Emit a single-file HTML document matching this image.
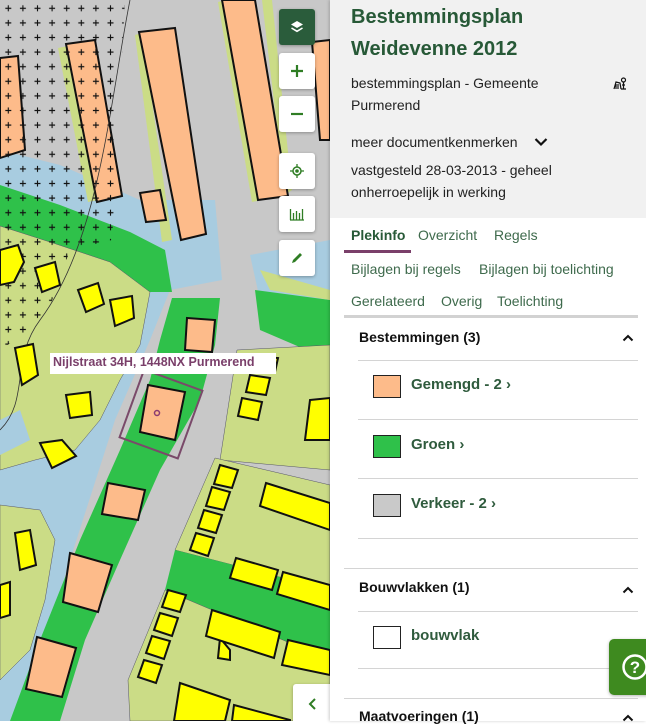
<!DOCTYPE html>
<html><head><meta charset="utf-8">
<style>
*{margin:0;padding:0;box-sizing:border-box}
body{width:646px;height:721px;overflow:hidden;position:relative;font-family:"Liberation Sans",sans-serif;background:#fff}
#map{position:absolute;left:0;top:0;width:330px;height:721px;overflow:hidden}
.btn{position:absolute;left:279px;width:36px;height:36px;background:#fff;border-radius:3px;box-shadow:0 1px 3px rgba(0,0,0,.3);display:flex;align-items:center;justify-content:center}
#panel{position:absolute;left:330px;top:0;width:316px;height:721px;background:#fff;box-shadow:-1px 0 3px rgba(0,0,0,.2)}
.hdr{position:absolute;left:0;top:0;width:316px;height:218px;background:#f1f1f1}
.t{position:absolute;white-space:nowrap}
.title{left:21px;font-size:20px;font-weight:bold;color:#275937}
.sm{left:21px;font-size:14px;color:#222}
.tab{font-size:14px;color:#3e6a4c}
.line{position:absolute;height:1px;background:#d4d4d4}
.sec{left:29px;font-size:14px;font-weight:bold;color:#111}
.sw{position:absolute;left:43px;width:28px;height:23px;border:1px solid #222}
.it{left:81px;font-size:15px;font-weight:bold;color:#2f5b3d}
.car{position:absolute;left:292px;font-size:13px;color:#111}
</style></head><body>
<div id="map">
<svg width="330" height="721" viewBox="0 0 330 721">
<defs>
<pattern id="pl" width="14.6" height="14.6" patternUnits="userSpaceOnUse" x="1" y="1">
<path d="M7.3 4.3v6M4.3 7.3h6" stroke="#111" stroke-width="1.1"/>
</pattern>
</defs>
<rect width="330" height="721" fill="#c8c8c8"/>
<!-- water -->
<polygon points="0,150 60,165 140,200 215,200 222,280 170,290 150,340 115,420 70,560 20,721 0,721" fill="#a8cce0"/>
<polygon points="250,255 330,240 330,330 260,300" fill="#a8cce0"/>
<!-- green band -->
<polygon points="0,185 60,205 130,232 165,250 172,292 150,292 110,262 50,242 0,226" fill="#2fc14a"/>
<polygon points="255,290 330,300 330,360 260,330" fill="#2fc14a"/>
<!-- left light green -->
<polygon points="0,226 50,242 110,262 150,292 140,345 120,380 100,420 75,450 35,460 0,470" fill="#cbdc86" stroke="#556" stroke-width=".5"/>
<polygon points="0,505 40,510 55,540 45,600 30,650 0,680" fill="#cbdc86" stroke="#556" stroke-width=".5"/>
<polygon points="0,420 20,410 30,440 0,455" fill="#a8cce0"/>
<!-- green strip along road -->
<polygon points="172,298 220,298 215,345 200,400 160,470 120,560 85,640 60,721 10,721 40,640 80,540 120,450 150,380 160,340" fill="#2fc14a"/>
<!-- right blocks -->
<polygon points="237,350 330,345 330,470 220,460" fill="#cbdc86" stroke="#556" stroke-width=".5"/>
<polygon points="215,458 330,485 330,590 175,550" fill="#cbdc86" stroke="#556" stroke-width=".5"/>
<polygon points="175,550 330,590 330,660 165,590" fill="#2fc14a"/>
<polygon points="165,590 330,660 330,721 130,721 128,680" fill="#cbdc86" stroke="#556" stroke-width=".5"/>
<polygon points="260,270 330,290 330,300 270,290" fill="#cbdc86"/>
<!-- light green strips near buildings -->
<polygon points="58,48 68,46 98,200 88,202" fill="#cbdc86"/>
<polygon points="135,35 142,33 172,240 162,242" fill="#cbdc86"/>
<polygon points="218,2 226,0 262,200 252,202" fill="#cbdc86"/>
<polygon points="262,0 272,0 292,190 285,195" fill="#cbdc86"/>
<!-- orange buildings -->
<g fill="#fdbb8a" stroke="#111" stroke-width="2">
<polygon points="0,58 18,56 25,150 0,158"/>
<polygon points="66,44 95,40 122,196 97,202"/>
<polygon points="139,32 175,28 206,234 181,240"/>
<polygon points="140,193 160,190 166,220 146,222"/>
<polygon points="222,0 255,0 288,196 258,200"/>
<polygon points="312,42 330,40 330,140 320,140"/>
<polygon points="187,318 215,320 212,352 185,350"/>
<polygon points="148,385 185,392 175,440 140,432"/>
<polygon points="108,483 145,490 138,520 102,514"/>
<polygon points="70,553 112,565 98,612 63,602"/>
<polygon points="37,637 76,648 62,697 26,689"/>
</g>
<!-- crosses area -->
<polygon points="0,0 125,0 112,240 70,250 45,320 0,350" fill="url(#pl)"/>
<path d="M130 0 C110 100 100 240 40 320 C10 360 30 400 0 430" stroke="#333" fill="none" stroke-width=".8"/>
<rect x="130" y="378" width="62" height="72" fill="none" stroke="#7a4a6a" stroke-width="2" transform="rotate(20 161 414)"/>
<circle cx="157" cy="413" r="2.5" fill="none" stroke="#8a3a70" stroke-width="1.5"/>
<!-- yellow houses -->
<g fill="#ffff00" stroke="#111" stroke-width="2">
<polygon points="0,250 18,245 24,262 14,282 0,285"/>
<polygon points="35,268 55,262 60,285 42,292"/>
<polygon points="78,290 98,283 104,304 86,312"/>
<polygon points="110,300 132,296 134,318 115,326"/>
<polygon points="15,348 33,344 38,375 22,385"/>
<polygon points="66,395 90,392 92,415 70,418"/>
<polygon points="40,443 62,440 76,456 52,468"/>
<polygon points="15,533 30,530 36,565 20,570"/>
<polygon points="0,585 10,582 10,615 0,618"/>
<polygon points="220,638 230,650 230,660 218,658"/>
<polygon points="260,357 278,358 275,372 258,370"/>
<polygon points="250,375 270,378 266,395 246,392"/>
<polygon points="242,398 262,402 258,420 238,416"/>
<polygon points="310,400 330,398 330,440 305,440"/>
<polygon points="220,465 238,470 232,488 214,484"/>
<polygon points="212,487 230,492 224,510 206,506"/>
<polygon points="204,510 222,515 216,533 198,528"/>
<polygon points="196,533 214,538 208,556 190,550"/>
<polygon points="266,483 330,503 330,530 260,506"/>
<polygon points="236,558 278,570 272,590 230,578"/>
<polygon points="283,572 330,585 330,610 277,594"/>
<polygon points="168,590 186,595 180,612 162,607"/>
<polygon points="160,613 178,618 172,636 154,630"/>
<polygon points="152,636 170,641 164,659 146,653"/>
<polygon points="144,660 162,665 156,683 138,677"/>
<polygon points="212,610 280,632 274,658 206,636"/>
<polygon points="288,640 330,650 330,675 282,665"/>
<polygon points="180,683 230,700 225,721 174,721"/>
<polygon points="234,705 290,720 290,721 232,721"/>
</g>
</svg>
<div style="position:absolute;left:50px;top:353px;width:226px;height:21px;background:#fff;color:#7a3f6a;font-size:12.5px;font-weight:bold;padding:2px 0 0 3px;white-space:nowrap">Nijlstraat 34H, 1448NX Purmerend</div>
<div class="btn" style="top:9px;background:#2a5c3b"><svg width="16" height="16" viewBox="0 0 16 16"><path d="M8 2 14 5.5 8 9 2 5.5Z" fill="#fff"/><path d="M2.5 9 8 12.3 13.5 9" stroke="#fff" stroke-width="1.6" fill="none"/></svg></div>
<div class="btn" style="top:53px"><svg width="14" height="14"><path d="M7 1v12M1 7h12" stroke="#2f7d24" stroke-width="2.2"/></svg></div>
<div class="btn" style="top:96px"><svg width="14" height="14"><path d="M1 7h12" stroke="#2f7d24" stroke-width="2.2"/></svg></div>
<div class="btn" style="top:153px"><svg width="14" height="14"><circle cx="7" cy="7" r="4" fill="none" stroke="#2f7d24" stroke-width="1.5"/><circle cx="7" cy="7" r="1.8" fill="#2f7d24"/><path d="M7 0v3M7 11v3M0 7h3M11 7h3" stroke="#2f7d24" stroke-width="1.3"/></svg></div>
<div class="btn" style="top:196px"><svg width="16" height="14"><path d="M1.5 2v11M4.5 6v7M7.5 4v9M10.5 6v7M13.5 2v11M1 13h14" stroke="#2f7d24" stroke-width="1.3"/></svg></div>
<div class="btn" style="top:240px"><svg width="14" height="14"><path d="M2 12l1-3 7-7 2 2-7 7z" fill="#2f7d24"/></svg></div>
<div class="btn" style="left:293px;top:684px;width:40px;height:40px;border-radius:3px 0 0 0"><svg width="12" height="14"><path d="M8 2 3 7l5 5" stroke="#2f7d24" stroke-width="2" fill="none"/></svg></div>
</div>
<div id="panel">
<div class="hdr"></div>
<div class="t title" style="top:6px">Bestemmingsplan</div>
<div class="t title" style="top:38px">Weidevenne 2012</div>
<div class="t sm" style="top:75px">bestemmingsplan - Gemeente</div>
<div class="t sm" style="top:97px">Purmerend</div>
<svg style="position:absolute;left:283px;top:77px" width="14" height="14" viewBox="0 0 14 14"><path d="M1 12 3 5 7 6 8 12M3 7v5M5 7v5" stroke="#111" stroke-width="1.2" fill="none"/><circle cx="10.5" cy="3" r="2" fill="none" stroke="#111" stroke-width="1.2"/><path d="M10.5 5v7M9 8h3M8 12h5" stroke="#111" stroke-width="1.2"/></svg>
<div class="t sm" style="top:134px">meer documentkenmerken</div>
<svg style="position:absolute;left:204px;top:137px" width="14" height="10"><path d="M1.5 2 7 7.5 12.5 2" stroke="#111" stroke-width="2.2" fill="none"/></svg>
<div class="t sm" style="top:162px">vastgesteld 28-03-2013 - geheel</div>
<div class="t sm" style="top:184px">onherroepelijk in werking</div>
<div class="t tab" style="left:21px;top:227px;font-weight:bold;color:#275937">Plekinfo</div>
<div class="t tab" style="left:88px;top:227px">Overzicht</div>
<div class="t tab" style="left:164px;top:227px">Regels</div>
<div style="position:absolute;left:14px;top:250px;width:67px;height:3px;background:#7a3f6a"></div>
<div class="t tab" style="left:21px;top:261px">Bijlagen bij regels</div>
<div class="t tab" style="left:149px;top:261px">Bijlagen bij toelichting</div>
<div class="t tab" style="left:21px;top:293px">Gerelateerd</div>
<div class="t tab" style="left:111px;top:293px">Overig</div>
<div class="t tab" style="left:167px;top:293px">Toelichting</div>
<div class="line" style="left:14px;top:315px;width:294px;height:3px;background:#d2d2d2"></div>
<div class="t sec" style="top:329px">Bestemmingen (3)</div>
<svg class="car" style="top:333px" width="12" height="9"><path d="M1.5 7.5 6 3 10.5 7.5" stroke="#111" stroke-width="2" fill="none"/></svg>
<div class="line" style="left:28px;top:360px;width:280px"></div>
<div class="sw" style="top:375px;background:#fdbb8a"></div>
<div class="t it" style="top:376px">Gemengd - 2 ›</div>
<div class="line" style="left:28px;top:419px;width:280px"></div>
<div class="sw" style="top:435px;background:#2fc14a"></div>
<div class="t it" style="top:436px">Groen ›</div>
<div class="line" style="left:28px;top:478px;width:280px"></div>
<div class="sw" style="top:494px;background:#c9c9c9"></div>
<div class="t it" style="top:495px">Verkeer - 2 ›</div>
<div class="line" style="left:28px;top:538px;width:280px"></div>
<div class="line" style="left:14px;top:568px;width:294px"></div>
<div class="t sec" style="top:579px">Bouwvlakken (1)</div>
<svg class="car" style="top:585px" width="12" height="9"><path d="M1.5 7.5 6 3 10.5 7.5" stroke="#111" stroke-width="2" fill="none"/></svg>
<div class="line" style="left:28px;top:611px;width:280px"></div>
<div class="sw" style="top:626px;background:#fff"></div>
<div class="t it" style="top:627px">bouwvlak</div>
<div class="line" style="left:28px;top:668px;width:280px"></div>
<div class="line" style="left:14px;top:698px;width:294px"></div>
<div class="t sec" style="top:708px">Maatvoeringen (1)</div>
<svg class="car" style="top:713px" width="12" height="9"><path d="M1.5 7.5 6 3 10.5 7.5" stroke="#111" stroke-width="2" fill="none"/></svg>
<div style="position:absolute;left:279px;top:639px;width:40px;height:56px;background:#3e8a1f;border-radius:5px 0 0 5px;box-shadow:0 1px 3px rgba(0,0,0,.3)">
<svg style="position:absolute;left:12px;top:14px" width="28" height="28"><circle cx="14" cy="14" r="11.5" fill="none" stroke="#fff" stroke-width="2.5"/><text x="14" y="20" text-anchor="middle" font-family="Liberation Sans" font-weight="bold" font-size="17" fill="#fff">?</text></svg>
</div>
</div>
</body></html>
